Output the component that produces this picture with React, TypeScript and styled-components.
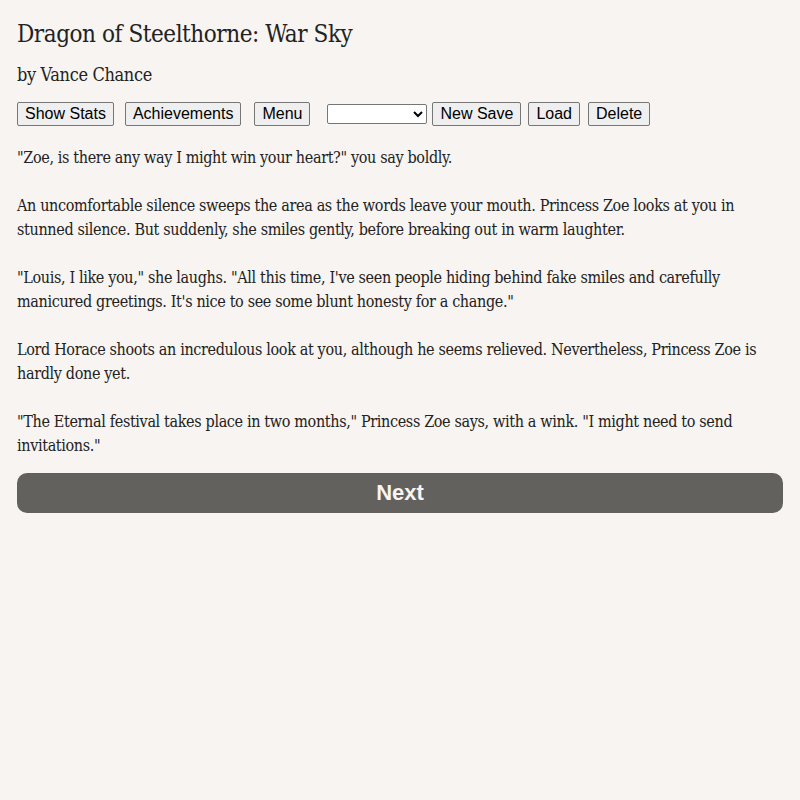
import styled, { createGlobalStyle } from 'styled-components';

const GlobalStyle = createGlobalStyle`
	html, body {
		margin: 0;
		padding: 0;
		background-color: #f7f4f1;
	}
	body {
		font-family: 'DejaVu Serif Condensed', 'DejaVu Serif', Georgia, serif;
		font-stretch: condensed;
		color: #222;
	}
`;

const paragraphs = [
	'"Zoe, is there any way I might win your heart?" you say boldly.',
	'An uncomfortable silence sweeps the area as the words leave your mouth. Princess Zoe looks at you in stunned silence. But suddenly, she smiles gently, before breaking out in warm laughter.',
	'"Louis, I like you," she laughs. "All this time, I\'ve seen people hiding behind fake smiles and carefully manicured greetings. It\'s nice to see some blunt honesty for a change."',
	'Lord Horace shoots an incredulous look at you, although he seems relieved. Nevertheless, Princess Zoe is hardly done yet.',
	'"The Eternal festival takes place in two months," Princess Zoe says, with a wink. "I might need to send invitations."',
];

function App() {
	return (
		<Page>
			<GlobalStyle />
			<Title>Dragon of Steelthorne: War Sky</Title>
			<Byline>by Vance Chance</Byline>
			<Toolbar>
				<ToolButton $gap={11}>Show Stats</ToolButton>
				<ToolButton $gap={13}>Achievements</ToolButton>
				<ToolButton $gap={17}>Menu</ToolButton>
				<SaveSelect defaultValue="">
					<option value=""></option>
				</SaveSelect>
				<ToolButton $gap={7}>New Save</ToolButton>
				<ToolButton $gap={8}>Load</ToolButton>
				<ToolButton $gap={0}>Delete</ToolButton>
			</Toolbar>
			<Story>
				{paragraphs.map((p, i) => (
					<Paragraph key={i}>{p}</Paragraph>
				))}
			</Story>
			<NextButton>Next</NextButton>
		</Page>
	);
}

export default App;

const Page = styled.div`
	padding: 17px 17px 40px;
	display: flex;
	flex-direction: column;
`;

const Title = styled.h1`
	margin: 0;
	font-size: 24px;
	font-weight: 400;
	line-height: 34px;
	letter-spacing: -0.45px;
`;

const Byline = styled.div`
	margin-top: 11px;
	font-size: 18px;
	line-height: 26px;
	letter-spacing: -0.35px;
`;

const Toolbar = styled.div`
	margin-top: 14px;
	display: flex;
	align-items: center;
	height: 24px;
`;

const ToolButton = styled.button<{ $gap: number }>`
	margin-right: ${(p) => p.$gap}px;
	height: 24px;
	padding: 1px 7px;
	font-family: 'Liberation Sans', Arial, sans-serif;
	font-size: 16px;
	color: #000;
	background-color: #efefef;
	border: 1px solid #767676;
	border-radius: 2px;
`;

const SaveSelect = styled.select`
	width: 100px;
	height: 20px;
	margin-right: 5px;
	font-family: 'Liberation Sans', Arial, sans-serif;
	font-size: 13px;
	background-color: #fff;
	border: 1px solid #767676;
	border-radius: 2px;
`;

const Story = styled.div`
	margin-top: 20px;
	display: flex;
	flex-direction: column;
	gap: 24px;
`;

const Paragraph = styled.p`
	margin: 0;
	font-size: 16px;
	line-height: 24px;
	letter-spacing: -0.35px;
`;

const NextButton = styled.button`
	margin-top: 15px;
	height: 40px;
	width: 100%;
	border: none;
	border-radius: 10px;
	background-color: #63615e;
	color: #f7f4f1;
	font-family: 'Liberation Sans', Arial, sans-serif;
	font-weight: 700;
	font-size: 22px;
`;
